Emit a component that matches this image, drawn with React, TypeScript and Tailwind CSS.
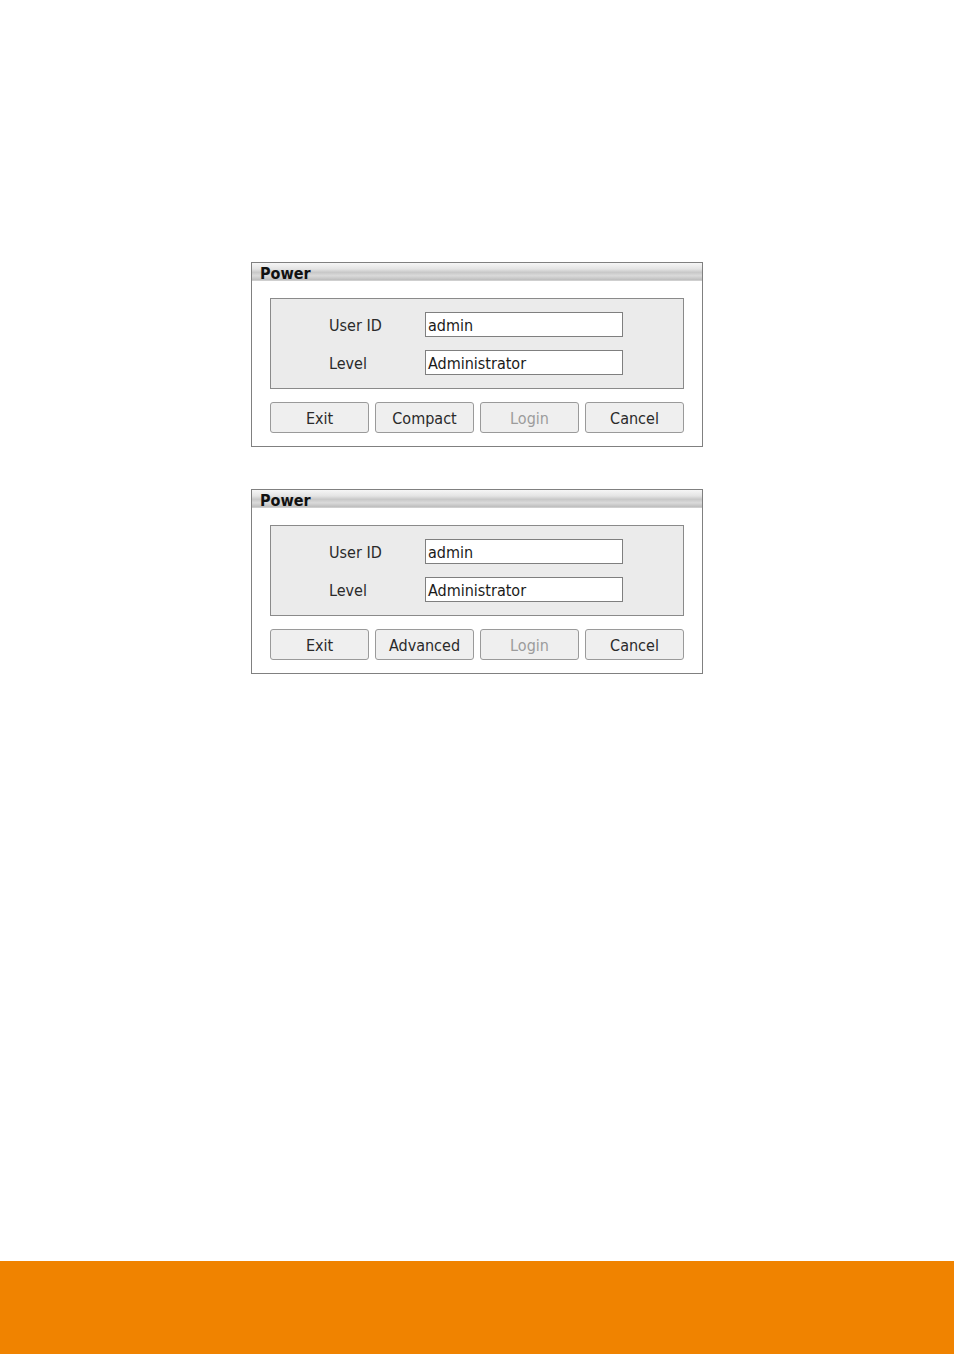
const titleBar =
  "bg-[linear-gradient(to_bottom,#f6f6f6_0%,#e4e4e4_35%,#c8c8c8_55%,#dadada_75%,#bdbdbd_100%)]";

function Field({ label, value }: { label: string; value: string }) {
  return (
    <div className="flex items-center h-[25px]">
      <span className="w-[96px] pl-[58px] pt-[2px] box-content text-[16px] leading-none text-[#2a2a2a]">{label}</span>
      <div className="w-[198px] h-[25px] border border-[#7f7f7f] bg-white pl-[2px] pt-[3px] flex items-center text-[16px] leading-none text-[#1a1a1a]">
        {value}
      </div>
    </div>
  );
}

function Btn({ label, disabled }: { label: string; disabled?: boolean }) {
  return (
    <div
      className={
        "h-[31px] pt-[2px] flex items-center justify-center rounded-[3px] border border-[#9a9a9a] bg-[#efefef] text-[16px] " +
        (disabled ? "text-[#9c9c9c]" : "text-[#2a2a2a]")
      }
    >
      {label}
    </div>
  );
}

function PowerDialog({ toggle }: { toggle: string }) {
  return (
    <div className="w-[452px] border border-[#808080] bg-white">
      <div className={"h-[18px] flex items-end pl-[8px] border-b border-[#cfcfcf] " + titleBar}>
        <span className="font-bold text-[16px] leading-[17px] translate-y-[2px] text-[#111]">Power</span>
      </div>
      <div className="px-[18px] pt-[17px] pb-[13px]">
        <div className="h-[91px] border border-[#8a8a8a] bg-[#ebebeb] flex flex-col justify-center gap-[13px]">
          <Field label="User ID" value="admin" />
          <Field label="Level" value="Administrator" />
        </div>
        <div className="mt-[13px] grid grid-cols-4 gap-[6px]">
          <Btn label="Exit" />
          <Btn label={toggle} />
          <Btn label="Login" disabled />
          <Btn label="Cancel" />
        </div>
      </div>
    </div>
  );
}

export default function App() {
  return (
    <div className="w-[954px] h-[1354px] bg-white flex flex-col font-['DejaVu_Sans_Condensed','DejaVu_Sans',sans-serif]">
      <div className="flex-1 pt-[262px] pl-[251px] flex flex-col gap-[42px]">
        <PowerDialog toggle="Compact" />
        <PowerDialog toggle="Advanced" />
      </div>
      <div className="h-[93px] bg-[#f08300]" />
    </div>
  );
}
